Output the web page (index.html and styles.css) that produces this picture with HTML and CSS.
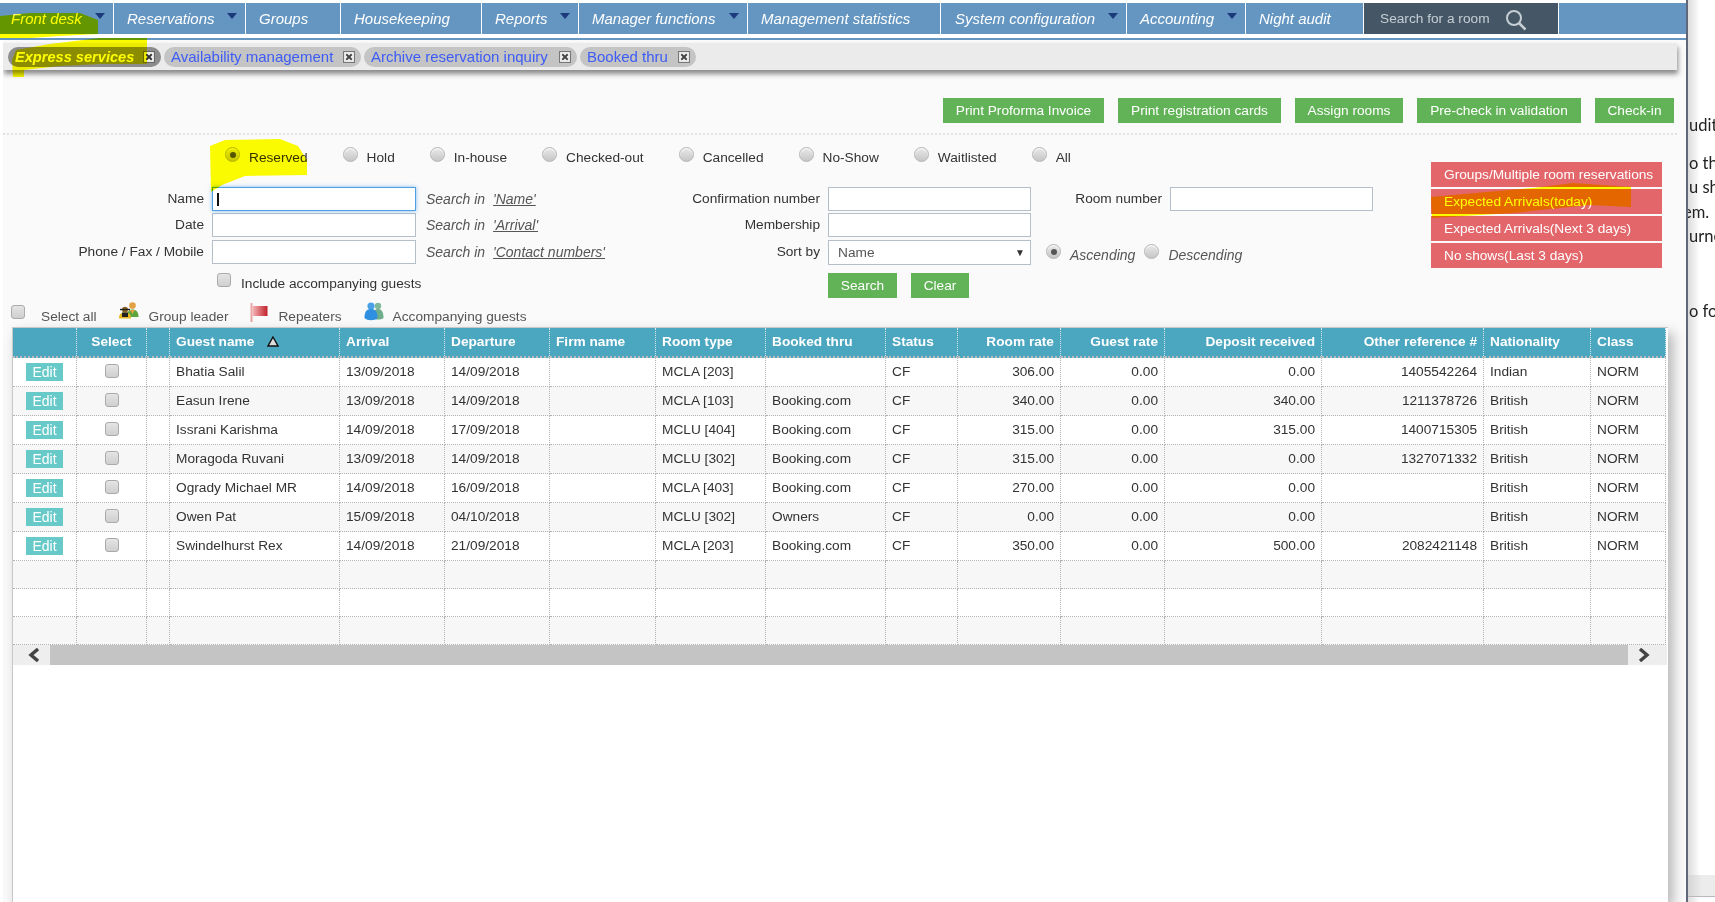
FILE: index.html
```html
<!DOCTYPE html>
<html lang="en">
<head>
<meta charset="utf-8">
<title>Express services</title>
<link rel="stylesheet" href="styles.css">
</head>
<body>
<div class="desktop">
  <main class="app">
    <nav class="nav">
      <a class="nav-item w1 first"><span>Front desk</span><i class="arrow"></i></a>
      <a class="nav-item w2"><span>Reservations</span><i class="arrow"></i></a>
      <a class="nav-item w3"><span>Groups</span></a>
      <a class="nav-item w4"><span>Housekeeping</span></a>
      <a class="nav-item w5"><span>Reports</span><i class="arrow"></i></a>
      <a class="nav-item w6"><span>Manager functions</span><i class="arrow"></i></a>
      <a class="nav-item w7"><span>Management statistics</span></a>
      <a class="nav-item w8"><span>System configuration</span><i class="arrow"></i></a>
      <a class="nav-item w9"><span>Accounting</span><i class="arrow"></i></a>
      <a class="nav-item w10"><span>Night audit</span></a>
      <div class="nav-search">
        <span>Search for a room</span>
        <svg class="search-icon" viewBox="0 0 22 22" width="22" height="22"><circle cx="9" cy="9" r="7" fill="none" stroke="#c6ced4" stroke-width="2"/><path d="M14 14l6.500 6.500" stroke="#c6ced4" stroke-width="2.600" fill="none"/></svg>
      </div>
    </nav>
    <div class="rule"></div>
    <div class="page">
      <div class="tabbar">
        <div class="tab active t1"><span>Express services</span><svg class="x" viewBox="0 0 11 11"><rect x=".5" y=".5" width="10" height="10" fill="#f2f2f2" stroke="#666"/><path d="M3 3l5 5M8 3l-5 5" stroke="#333" stroke-width="1.700"/></svg></div>
        <div class="tab t2"><span>Availability management</span><svg class="x" viewBox="0 0 11 11"><rect x=".5" y=".5" width="10" height="10" fill="#f2f2f2" stroke="#777"/><path d="M3 3l5 5M8 3l-5 5" stroke="#444" stroke-width="1.700"/></svg></div>
        <div class="tab t3"><span>Archive reservation inquiry</span><svg class="x" viewBox="0 0 11 11"><rect x=".5" y=".5" width="10" height="10" fill="#f2f2f2" stroke="#777"/><path d="M3 3l5 5M8 3l-5 5" stroke="#444" stroke-width="1.700"/></svg></div>
        <div class="tab t4"><span>Booked thru</span><svg class="x" viewBox="0 0 11 11"><rect x=".5" y=".5" width="10" height="10" fill="#f2f2f2" stroke="#777"/><path d="M3 3l5 5M8 3l-5 5" stroke="#444" stroke-width="1.700"/></svg></div>
      </div>

      <div class="actions">
        <button class="btn a1">Print Proforma Invoice</button>
        <button class="btn a2">Print registration cards</button>
        <button class="btn a3">Assign rooms</button>
        <button class="btn a4">Pre-check in validation</button>
        <button class="btn a5">Check-in</button>
      </div>
      <div class="dots"></div>

      <section class="search">
        <div class="search-main">
          <div class="status-row">
            <label class="status"><i class="radio on"></i><span>Reserved</span></label>
            <label class="status"><i class="radio"></i><span>Hold</span></label>
            <label class="status"><i class="radio"></i><span>In-house</span></label>
            <label class="status"><i class="radio"></i><span>Checked-out</span></label>
            <label class="status"><i class="radio"></i><span>Cancelled</span></label>
            <label class="status"><i class="radio"></i><span>No-Show</span></label>
            <label class="status"><i class="radio"></i><span>Waitlisted</span></label>
            <label class="status"><i class="radio"></i><span>All</span></label>
          </div>
          <div class="form">
            <div class="lbl">Name</div>
            <div class="field"><input class="input focus" type="text"><i class="caret"></i></div>
            <div class="hint">Search in <a>'Name'</a></div>
            <div class="lbl">Confirmation number</div>
            <input class="input" type="text">
            <div class="lbl">Room number</div>
            <input class="input" type="text">

            <div class="lbl">Date</div>
            <input class="input" type="text">
            <div class="hint">Search in <a>'Arrival'</a></div>
            <div class="lbl">Membership</div>
            <input class="input" type="text">
            <div class="blank"></div>

            <div class="lbl">Phone / Fax / Mobile</div>
            <input class="input" type="text">
            <div class="hint">Search in <a>'Contact numbers'</a></div>
            <div class="lbl">Sort by</div>
            <div class="select"><span>Name</span><b>▼</b></div>
            <div class="order">
              <i class="radio small on"></i><em>Ascending</em>
              <i class="radio small"></i><em>Descending</em>
            </div>

            <div class="blank-one"></div>
            <label class="include"><i class="check"></i><span>Include accompanying guests</span></label>
            <div class="blank-one"></div>
            <div class="search-btns">
              <button class="btn s1">Search</button>
              <button class="btn s2">Clear</button>
            </div>
          </div>
        </div>
        <div class="quick">
          <button class="qbtn">Groups/Multiple room reservations</button>
          <button class="qbtn">Expected Arrivals(today)</button>
          <button class="qbtn">Expected Arrivals(Next 3 days)</button>
          <button class="qbtn">No shows(Last 3 days)</button>
        </div>
      </section>

      <div class="legend">
        <i class="check"></i><span class="lg l1">Select all</span>
        <svg class="lg-icon i1" viewBox="0 0 20 17"><circle cx="13.500" cy="3.600" r="3.300" fill="#e2a243"/><path d="M8 15c0-5.500 2-7.500 5.500-7.500S19.500 9.500 19.500 15z" fill="#5da53c"/><path d="M11 8h5l-2.500 4z" fill="#e2a243"/><circle cx="6" cy="7.800" r="3" fill="#8a6420"/><path d="M1 6.800h10v1.400H1z" fill="#222"/><path d="M0 16.500c0-4.500 2.200-6 6-6s6 1.500 6 6z" fill="#e8b820"/><path d="M3 10.500h6v4.500H3z" fill="#222"/></svg>
        <span class="lg l2">Group leader</span>
        <svg class="lg-icon i2" viewBox="0 0 18 19"><defs><linearGradient id="flag"><stop offset="0" stop-color="#f3b7b7"/><stop offset="1" stop-color="#c21f2b"/></linearGradient></defs><path d="M1.500 0v19" stroke="#e9a6a6" stroke-width="2"/><path d="M2.500 3h15v10h-15z" fill="url(#flag)"/></svg>
        <span class="lg l3">Repeaters</span>
        <svg class="lg-icon i3" viewBox="0 0 20 19"><circle cx="14" cy="4" r="3.200" fill="#7fb99a"/><path d="M9 16c0-7 2-9 5-9s5.500 2 5.500 9c-3 2-8 2-10.500 0z" fill="#6fae8c"/><circle cx="7" cy="4" r="3.600" fill="#4aa0e6"/><path d="M.5 16C.5 9 3 7 7 7s6.500 2 6.500 9c-3 3-10 3-13 0z" fill="#2f8fe0"/></svg>
        <span class="lg l4">Accompanying guests</span>
      </div>

      <section class="panel">
        <table class="grid">
          <colgroup>
            <col class="c1"><col class="c2"><col class="c3"><col class="c4"><col class="c5"><col class="c6"><col class="c7"><col class="c8"><col class="c9"><col class="c10"><col class="c11"><col class="c12"><col class="c13"><col class="c14"><col class="c15"><col class="c16">
          </colgroup>
          <thead>
            <tr>
              <th></th><th class="ctr">Select</th><th></th>
              <th>Guest name<svg class="sort" viewBox="0 0 12 11"><path d="M6 1l5 9H1z" fill="#ddd" stroke="#111" stroke-width="1.400"/></svg></th>
              <th>Arrival</th><th>Departure</th><th>Firm name</th><th>Room type</th><th>Booked thru</th><th>Status</th>
              <th class="num">Room rate</th><th class="num">Guest rate</th><th class="num">Deposit received</th><th class="num">Other reference #</th><th>Nationality</th><th>Class</th>
            </tr>
          </thead>
          <tbody>
            <tr><td class="ctr"><span class="edit">Edit</span></td><td class="ctr"><i class="check cell"></i></td><td></td><td>Bhatia Salil</td><td>13/09/2018</td><td>14/09/2018</td><td></td><td>MCLA [203]</td><td></td><td>CF</td><td class="num">306.00</td><td class="num">0.00</td><td class="num">0.00</td><td class="num">1405542264</td><td>Indian</td><td>NORM</td></tr>
            <tr><td class="ctr"><span class="edit">Edit</span></td><td class="ctr"><i class="check cell"></i></td><td></td><td>Easun Irene</td><td>13/09/2018</td><td>14/09/2018</td><td></td><td>MCLA [103]</td><td>Booking.com</td><td>CF</td><td class="num">340.00</td><td class="num">0.00</td><td class="num">340.00</td><td class="num">1211378726</td><td>British</td><td>NORM</td></tr>
            <tr><td class="ctr"><span class="edit">Edit</span></td><td class="ctr"><i class="check cell"></i></td><td></td><td>Issrani Karishma</td><td>14/09/2018</td><td>17/09/2018</td><td></td><td>MCLU [404]</td><td>Booking.com</td><td>CF</td><td class="num">315.00</td><td class="num">0.00</td><td class="num">315.00</td><td class="num">1400715305</td><td>British</td><td>NORM</td></tr>
            <tr><td class="ctr"><span class="edit">Edit</span></td><td class="ctr"><i class="check cell"></i></td><td></td><td>Moragoda Ruvani</td><td>13/09/2018</td><td>14/09/2018</td><td></td><td>MCLU [302]</td><td>Booking.com</td><td>CF</td><td class="num">315.00</td><td class="num">0.00</td><td class="num">0.00</td><td class="num">1327071332</td><td>British</td><td>NORM</td></tr>
            <tr><td class="ctr"><span class="edit">Edit</span></td><td class="ctr"><i class="check cell"></i></td><td></td><td>Ogrady Michael MR</td><td>14/09/2018</td><td>16/09/2018</td><td></td><td>MCLA [403]</td><td>Booking.com</td><td>CF</td><td class="num">270.00</td><td class="num">0.00</td><td class="num">0.00</td><td class="num"></td><td>British</td><td>NORM</td></tr>
            <tr><td class="ctr"><span class="edit">Edit</span></td><td class="ctr"><i class="check cell"></i></td><td></td><td>Owen Pat</td><td>15/09/2018</td><td>04/10/2018</td><td></td><td>MCLU [302]</td><td>Owners</td><td>CF</td><td class="num">0.00</td><td class="num">0.00</td><td class="num">0.00</td><td class="num"></td><td>British</td><td>NORM</td></tr>
            <tr><td class="ctr"><span class="edit">Edit</span></td><td class="ctr"><i class="check cell"></i></td><td></td><td>Swindelhurst Rex</td><td>14/09/2018</td><td>21/09/2018</td><td></td><td>MCLA [203]</td><td>Booking.com</td><td>CF</td><td class="num">350.00</td><td class="num">0.00</td><td class="num">500.00</td><td class="num">2082421148</td><td>British</td><td>NORM</td></tr>
            <tr class="empty"><td></td><td></td><td></td><td></td><td></td><td></td><td></td><td></td><td></td><td></td><td></td><td></td><td></td><td></td><td></td><td></td></tr>
            <tr class="empty"><td></td><td></td><td></td><td></td><td></td><td></td><td></td><td></td><td></td><td></td><td></td><td></td><td></td><td></td><td></td><td></td></tr>
            <tr class="empty"><td></td><td></td><td></td><td></td><td></td><td></td><td></td><td></td><td></td><td></td><td></td><td></td><td></td><td></td><td></td><td></td></tr>
          </tbody>
        </table>
        <div class="hscroll">
          <div class="sb-btn left"><svg viewBox="0 0 12 14" width="12" height="14"><path d="M10 1L3 7l7 6" fill="none" stroke="#444" stroke-width="3.400"/></svg></div>
          <div class="sb-track"></div>
          <div class="sb-btn right"><svg viewBox="0 0 12 14" width="12" height="14"><path d="M2 1l7 6-7 6" fill="none" stroke="#444" stroke-width="3.400"/></svg></div>
        </div>
      </section>
    </div>
  </main>
  <aside class="doc">
    <p class="d1">udit</p>
    <p class="d2">o th</p>
    <p class="d3">u sh</p>
    <p class="d3 cut">em. I</p>
    <p class="d3">urne</p>
    <p class="d4">o fo</p>
    <div class="doc-bar"></div>
  </aside>
  <svg class="marker" viewBox="0 0 1715 902" width="1715" height="902" aria-hidden="true">
    <path fill="#ffff00" d="M0 16L30 13 80 13 98 20 98 34 60 36 30 38 0 38Z"/>
    <path fill="#ffff00" d="M147 38L100 38 50 44 16 50 12 60 13 77 24 77 24 70 60 66 100 64 147 64Z"/>
    <path fill="#ffff00" d="M210 146L225 140 280 139 298 146 307 160 307 175 245 176 222 185 211 192Z"/>
    <path fill="#ffff00" d="M1431 197L1533 188 1573 183 1631 187 1631 207 1590 205 1513 213 1432 218Z"/>
  </svg>
</div>
</body>
</html>
```
FILE: styles.css
```css
* { box-sizing: border-box; }
html, body { margin: 0; height: 100%; }
body {
  background: #fff;
  font-family: "Liberation Sans", Arial, sans-serif;
  font-size: 13.7px;
  color: #333;
  overflow: hidden;
}
.desktop { position: relative; display: flex; width: 1715px; height: 902px; overflow: hidden; }
.app { width: 1686px; flex: none; display: flex; flex-direction: column; height: 902px; padding-top: 3px; }

/* nav */
.nav { display: flex; height: 31px; background: #6496c1; margin-bottom: 4px; flex: none; }
.nav-item {
  display: flex; justify-content: space-between; height: 100%;
  padding: 0 8px 0 13px;
  border-right: 1px solid #fff;
  color: #fff; font-style: italic; font-size: 15px; line-height: 31px;
}
.nav-item.first { padding-left: 11px; }
.w1 { width: 114px; } .w2 { width: 132px; } .w3 { width: 95px; } .w4 { width: 141px; }
.w5 { width: 97px; } .w6 { width: 169px; } .w7 { width: 193px; } .w8 { width: 186px; padding-left: 14px; }
.w9 { width: 119px; } .w10 { width: 118px; }
.arrow {
  width: 0; height: 0; margin-top: 10px;
  border-left: 5.5px solid transparent; border-right: 5.5px solid transparent;
  border-top: 6px solid #1d3b7c;
}
.nav-search {
  width: 195px; display: flex; align-items: center; gap: 15px;
  padding-left: 16px; background: #455766; color: #c6ced4; font-size: 13.7px;
  border-right: 1px solid #fff;
}
.search-icon { margin-top: 2px; }
.rule { height: 2px; background: #6496c1; flex: none; }

/* page */
.page { margin-left: 3px; flex: 1; background: #fafafa; overflow: hidden; padding-top: 3px; display: flex; flex-direction: column; }
.tabbar {
  height: 27px; margin-right: 9px; background: #ebebeb; flex: none;
  box-shadow: 1px 4px 5px rgba(0,0,0,.45);
  display: flex; align-items: center; gap: 3px; padding: 0 0 0 5px;
}
.tab {
  height: 20px; border-radius: 10px; background: #c4c4c4; color: #3d5cf5;
  display: flex; align-items: center; justify-content: space-between;
  font-size: 15px; padding: 0 6px 0 7px;
}
.tab.active { background: #8c8c8c; color: #fff; font-weight: bold; font-style: italic; font-size: 14.600px; padding-right: 6px; }
.t1 { width: 153px; } .t2 { width: 197px; } .t3 { width: 213px; } .t4 { width: 116px; }
.x { width: 12px; height: 12px; flex: none; }

/* actions */
.actions { display: flex; justify-content: flex-end; gap: 14px; padding-right: 12px; margin-top: 28px; flex: none; }
.btn {
  height: 25px; border: 0; padding: 0; background: #62b357; color: #fff;
  font: 13.7px/25px "Liberation Sans", Arial, sans-serif; flex: none;
}
.a1 { width: 161px; } .a2 { width: 163px; } .a3 { width: 108px; } .a4 { width: 164px; } .a5 { width: 79px; }
.dots { height: 2px; margin: 10px 9px 0 0; border-top: 2px dotted #e2e2e2; flex: none; }

/* search */
.search { display: flex; height: 167px; flex: none; }
.search-main { width: 1428px; flex: none; }
.status-row { display: flex; gap: 35px; padding: 12px 0 0 222px; height: 52px; }
.status { display: flex; gap: 9px; }
.status span { margin-top: 3px; color: #333; }
.radio {
  display: block; flex: none; width: 15px; height: 15px; border-radius: 50%;
  border: 1px solid #b5b5b5;
  background: linear-gradient(#e9e9e9, #c6c6c6);
  box-shadow: inset 0 1px 1px #fff;
  position: relative;
}
.radio.on::after {
  content: ""; position: absolute; left: 3.500px; top: 3.500px; width: 6px; height: 6px;
  border-radius: 50%; background: #555;
}
.form {
  display: grid;
  grid-template-columns: 201px 204px 196px 192px 203px 123px 203px;
  grid-template-rows: 26px 27px 33px 25px;
  column-gap: 8px;
  align-items: start;
}
.lbl { text-align: right; line-height: 24px; color: #333; }
.input { display: block; width: 100%; height: 24px; background: #fff; border: 1px solid #b4bfca; border-radius: 0; padding: 0; outline: 0; }
.field { position: relative; }
.input.focus { border-color: #4f9fe6; box-shadow: 0 0 4px rgba(80,160,235,.7); }
.caret { position: absolute; left: 5px; top: 6px; width: 2px; height: 13px; background: #111; }
.hint { font-style: italic; color: #555; line-height: 24px; padding-left: 2px; font-size: 14px; }
.hint a { margin-left: 4px; text-decoration: underline; }
.select {
  display: flex; justify-content: space-between; align-items: center;
  height: 25px; background: #fff; border: 1px solid #b4bfca; padding: 0 5px 1px 9px; color: #555;
}
.select b { font-weight: normal; font-size: 10px; color: #333; }
.order { grid-column: span 2; display: flex; padding: 4px 0 0 7px; font-size: 14px; }
.order em { margin: 3px 0 0 9px; color: #555; }
.order .radio + em + .radio { margin-left: 9px; }
.blank { grid-column: span 2; }
.include { display: flex; gap: 10px; padding-left: 5px; grid-column: span 2; white-space: nowrap; }
.include span { margin-top: 3px; color: #333; }
.check {
  display: block; flex: none; width: 14px; height: 14px; border-radius: 3px;
  border: 1px solid #aaa; background: linear-gradient(#e4e4e4, #cfcfcf);
}
.search-btns { display: flex; gap: 14px; }
.s1 { width: 69px; } .s2 { width: 58px; }
.quick { display: flex; flex-direction: column; gap: 2px; padding-top: 27px; }
.qbtn {
  width: 231px; height: 25px; border: 0; background: #e3666a; color: #fff; text-align: left;
  padding: 0 0 0 13px; font: 13.7px/25px "Liberation Sans", Arial, sans-serif;
}

/* legend */
.legend { display: flex; align-items: flex-start; padding-left: 8px; height: 25px; flex: none; }
.legend .check { margin-top: 3px; }
.lg { margin: 7px 22px 0 0; color: #555; }
.l1 { margin-left: 16px; }
.lg-icon { flex: none; margin-right: 10px; }
.i1 { width: 20px; height: 17px; }
.i2 { width: 18px; height: 19px; margin-top: 1px; }
.i3 { width: 20px; height: 19px; margin-right: 9px; }

/* panel */
.panel {
  flex: 1; margin: 0 18px 0 9px; background: #fff;
  border-left: 1px solid #c8c8c8; border-top: 1px solid #c8c8c8;
  box-shadow: 5px 6px 12px rgba(0,0,0,.28);
  padding-right: 2px;
}
.grid { border-collapse: separate; border-spacing: 0; table-layout: fixed; width: 1653px; }
.c1 { width: 64px; } .c2 { width: 70px; } .c3 { width: 23px; } .c4 { width: 170px; }
.c5 { width: 105px; } .c6 { width: 105px; } .c7 { width: 106px; } .c8 { width: 110px; }
.c9 { width: 120px; } .c10 { width: 72px; } .c11 { width: 103px; } .c12 { width: 104px; }
.c13 { width: 157px; } .c14 { width: 162px; } .c15 { width: 107px; } .c16 { width: 75px; }
.grid th, .grid td { padding: 0 6px; white-space: nowrap; text-align: left; border-right: 1px dotted #b3b3b3; border-bottom: 1px dotted #b3b3b3; }
.grid th { height: 30px; background: #4ba6c0; color: #fff; font-weight: bold; border-right-color: #d8e8ee; border-bottom: 2px dotted #bbb; padding-bottom: 1px; }
.grid td { height: 29px; color: #333; padding-bottom: 2px; }
.grid td.ctr { padding-bottom: 0; }
.grid tbody tr:nth-child(even) td { background: #f7f7f7; }
.grid tr.empty td { height: 28px; background: #fff; }
.grid tbody tr.empty:nth-child(even) td { background: #f7f7f7; }
.grid .num { text-align: right; }
.grid .ctr { text-align: center; }
.sort { width: 12px; height: 11px; margin-left: 13px; vertical-align: -1px; }
.edit { display: inline-block; width: 37px; height: 18px; line-height: 19px; background: #68c9c9; color: #fff; vertical-align: middle; font-size: 14px; }
.check.cell { margin: 0 auto 2px; }
.hscroll { display: flex; height: 20px; width: 1654px; }
.sb-btn { width: 37px; background: #eee; display: flex; align-items: center; justify-content: center; flex: none; }
.sb-btn.left { padding-left: 5px; }
.sb-btn.right { width: 39px; padding-right: 8px; }
.sb-track { flex: 1; background: #c4c4c4; }

/* document behind */
.doc {
  flex: 1; border-left: 2px solid #5f6779; overflow: hidden; position: relative;
  background: linear-gradient(90deg, #dcdcdc, #fff 12px);
  font-family: Lato, "Open Sans", sans-serif; font-size: 16.500px; color: #222; white-space: nowrap;
}
.doc p { margin: 0; line-height: 24.500px; padding-left: 1px; }
.doc .d1 { margin-top: 113px; }
.doc .d2 { margin-top: 13px; }
.doc .d4 { margin-top: 50px; }
.doc .cut { margin-left: -6px; }
.doc-bar { position: absolute; left: 0; right: 0; top: 875px; height: 22px; background: linear-gradient(90deg, #d5d5d5, #ececec 14px); border-bottom: 1px solid #b8b8b8; }

/* highlighter strokes laid over the screenshot */
.marker { position: absolute; left: 0; top: 0; mix-blend-mode: multiply; pointer-events: none; }
```
